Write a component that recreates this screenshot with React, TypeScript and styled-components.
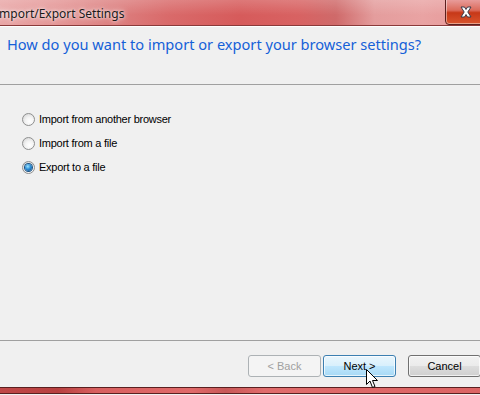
import styled, { createGlobalStyle } from "styled-components";

const GlobalStyle = createGlobalStyle`
  html, body {
    margin: 0;
    padding: 0;
    background: #f0f0f0;
  }
  body {
    width: 480px;
    height: 395px;
    overflow: hidden;
  }
`;

const Window = styled.div`
  position: relative;
  display: flex;
  flex-direction: column;
  width: 480px;
  height: 395px;
  overflow: hidden;
  background: #f0f0f0;
`;

const TitleBar = styled.div`
  position: relative;
  display: flex;
  align-items: center;
  height: 25px;
  flex-shrink: 0;
  background:
    linear-gradient(180deg, rgba(255, 255, 255, 0.18) 0%, rgba(255, 255, 255, 0) 60%),
    linear-gradient(90deg, #e9a7a7 0%, #e49696 12%, #dd8383 22%, #d96a6a 35%, #d65b5b 50%, #d86262 62%, #cf6a6a 70%, #e49d9d 78%, #e9a3a3 88%, #e69898 100%);
  border-bottom: 1px solid #8a3a3a;
  box-shadow: 0 1px 0 #ffffff;
  z-index: 1;
`;

const TitleText = styled.span`
  margin-left: -5px;
  padding-top: 1px;
  font-family: "Noto Sans", "Open Sans", sans-serif;
  font-size: 12px;
  color: #1a1a1a;
  text-shadow: 0 0 6px rgba(255, 255, 255, 0.9), 0 0 3px rgba(255, 255, 255, 0.9);
  white-space: nowrap;
`;

const CloseButton = styled.div`
  position: absolute;
  top: -2px;
  right: -6px;
  display: flex;
  align-items: center;
  justify-content: center;
  width: 39px;
  height: 25px;
  border: 1px solid #5a1f1f;
  border-radius: 0 0 4px 4px;
  background: linear-gradient(180deg, #e9a0a0 0%, #db6a5a 45%, #c73818 55%, #d9552e 100%);
  box-shadow: inset 0 0 0 1px rgba(255, 255, 255, 0.45);
`;

const Header = styled.div`
  display: flex;
  align-items: flex-start;
  height: 59px;
  flex-shrink: 0;
  padding: 8px 0 0 7px;
  box-sizing: border-box;
  border-bottom: 1px solid #a0a0a0;
`;

const Heading = styled.h1`
  margin: 0;
  font-family: "Noto Sans", "Open Sans", sans-serif;
  font-weight: 400;
  font-size: 14.6px;
  line-height: 20px;
  color: #1560d8;
  white-space: nowrap;
`;

const Body = styled.div`
  display: flex;
  flex-direction: column;
  flex: 1;
  padding: 26px 0 0 22px;
  gap: 8px;
  border-bottom: 1px solid #a0a0a0;
`;

const RadioRow = styled.label`
  display: flex;
  align-items: center;
  gap: 4px;
  height: 16px;
  font-family: "Liberation Sans", Arial, sans-serif;
  font-size: 11px;
  letter-spacing: -0.25px;
  color: #000;
`;

const RadioCircle = styled.span<{ checked?: boolean }>`
  position: relative;
  display: block;
  width: 11px;
  height: 11px;
  border: 1px solid #8e8f8f;
  border-radius: 50%;
  background: radial-gradient(circle at 60% 65%, #ffffff 0%, #f4f4f4 40%, #cfcfcf 100%);

  &::after {
    content: '';
    display: ${(p) => (p.checked ? "block" : "none")};
    position: absolute;
    top: 2px;
    left: 2px;
    width: 7px;
    height: 7px;
    border-radius: 50%;
    background: radial-gradient(circle at 40% 35%, #9ee6ff 0%, #2d8ed6 45%, #0b3f7a 100%);
    box-shadow: 0 0 0 1px #1c5180;
  }
`;

const Footer = styled.div`
  display: flex;
  align-items: flex-start;
  justify-content: flex-end;
  height: 46px;
  flex-shrink: 0;
  padding-top: 14px;
  box-sizing: border-box;
  gap: 2px;
`;

const Button = styled.div<{ disabled?: boolean; primary?: boolean }>`
  display: flex;
  align-items: center;
  justify-content: center;
  width: 71px;
  height: 20px;
  border: 1px solid ${(p) => (p.disabled ? "#adb2b5" : p.primary ? "#3c7fb1" : "#707070")};
  border-radius: 3px;
  font-family: "Liberation Sans", Arial, sans-serif;
  font-size: 11px;
  color: ${(p) => (p.disabled ? "#a0a0a0" : "#000")};
  background: ${(p) =>
    p.disabled
      ? "#f4f4f4"
      : p.primary
      ? "linear-gradient(180deg, #eaf6fd 0%, #d9f0fc 48%, #bee6fd 52%, #a7d9f5 100%)"
      : "linear-gradient(180deg, #f2f2f2 0%, #ebebeb 48%, #dddddd 52%, #cfcfcf 100%)"};
  box-shadow: inset 0 0 0 1px ${(p) => (p.disabled ? "#f4f4f4" : "rgba(255,255,255,0.7)")};
`;

const CancelButton = styled(Button)`
  margin-left: 10px;
  margin-right: -1px;
`;

const BottomFrame = styled.div`
  height: 5px;
  flex-shrink: 0;
  border-top: 1px solid #5a2020;
  border-bottom: 1px solid #5a2020;
  background: linear-gradient(90deg, #c04848 0%, #b84040 12%, #d86060 20%, #e06a6a 40%, #c85858 47%, #e06c6c 55%, #dc6464 100%);
  margin-bottom: 1px;
`;

const Cursor = styled.svg`
  position: absolute;
  left: 366px;
  top: 369px;
`;

export default function App() {
  return (
    <Window>
      <GlobalStyle />
      <TitleBar>
        <TitleText>Import/Export Settings</TitleText>
        <CloseButton>
          <svg width="14" height="12" viewBox="0 0 14 12">
            <path
              d="M2 1 L5.5 1 L7 3.5 L8.5 1 L12 1 L8.8 6 L12 11 L8.5 11 L7 8.5 L5.5 11 L2 11 L5.2 6 Z"
              fill="#ffffff"
              stroke="#3a3a4a"
              strokeWidth="1"
              strokeLinejoin="round"
            />
          </svg>
        </CloseButton>
      </TitleBar>
      <Header>
        <Heading>How do you want to import or export your browser settings?</Heading>
      </Header>
      <Body>
        <RadioRow>
          <RadioCircle />
          Import from another browser
        </RadioRow>
        <RadioRow>
          <RadioCircle />
          Import from a file
        </RadioRow>
        <RadioRow>
          <RadioCircle checked />
          Export to a file
        </RadioRow>
      </Body>
      <Footer>
        <Button disabled>&lt; Back</Button>
        <Button primary>Next &gt;</Button>
        <CancelButton>Cancel</CancelButton>
      </Footer>
      <BottomFrame />
      <Cursor width="13" height="20" viewBox="0 0 13 20">
        <path
          d="M0.5 0.5 L0.5 15.5 L4 12 L6.5 18.5 L9 17.5 L6.5 11.5 L11.5 11.5 Z"
          fill="#ffffff"
          stroke="#000000"
          strokeWidth="1"
          strokeLinejoin="miter"
        />
      </Cursor>
    </Window>
  );
}
